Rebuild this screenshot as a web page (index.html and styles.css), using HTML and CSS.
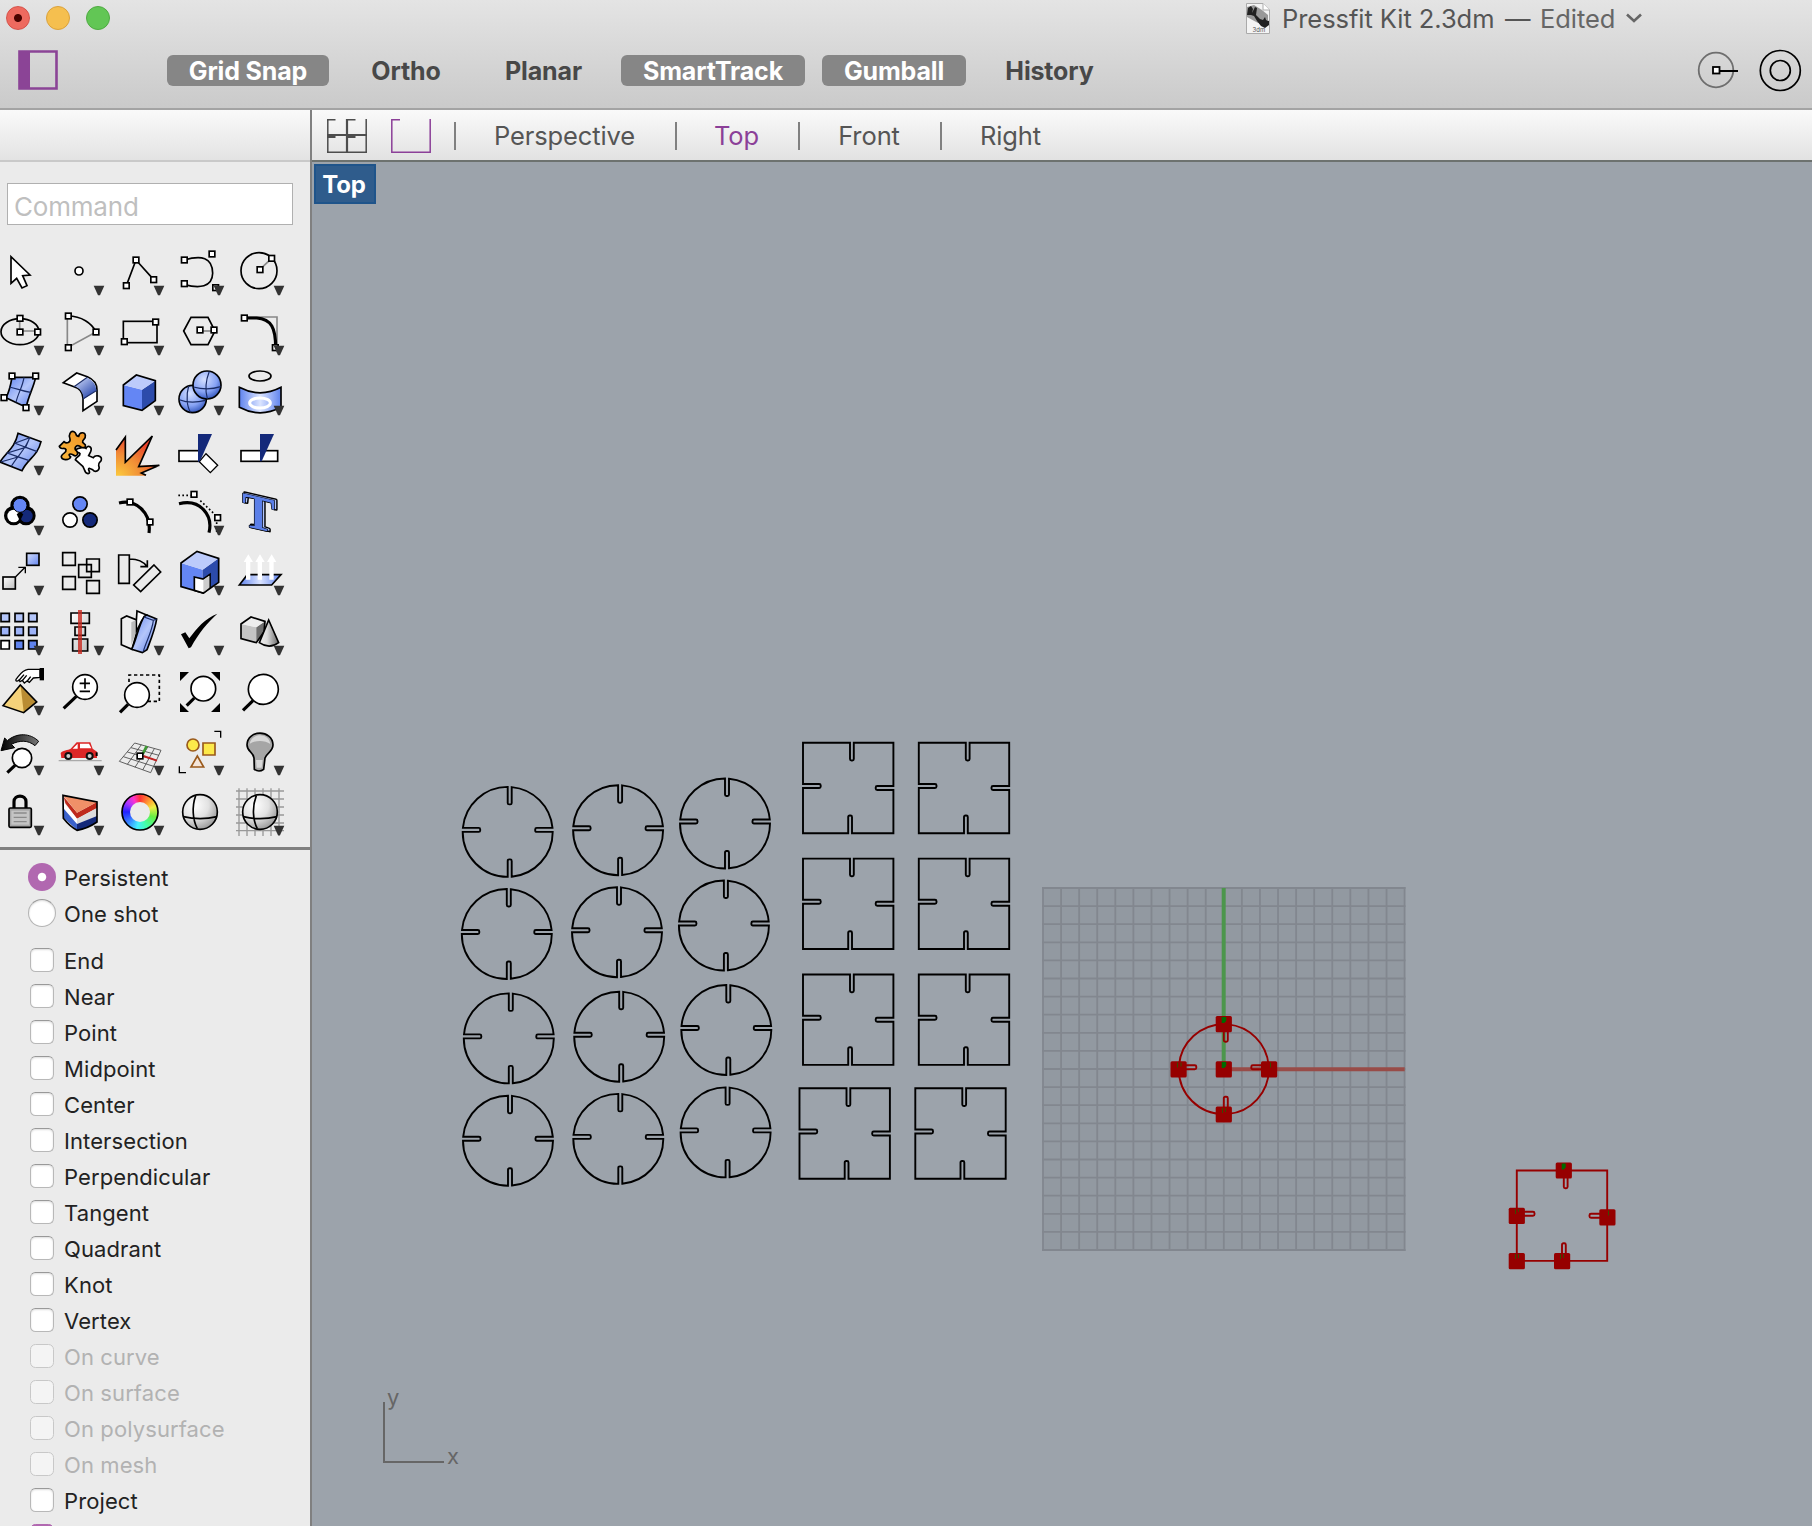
FILE: index.html
```html
<!DOCTYPE html>
<html lang="en">
<head>
<meta charset="utf-8">
<title>Pressfit Kit 2.3dm</title>
<link rel="stylesheet" href="styles.css">
</head>
<body>
<svg class="defs" width="0" height="0" aria-hidden="true">
  <defs>
    <linearGradient id="blue" x1="0" y1="0" x2="1" y2="1"><stop offset="0" stop-color="#5f83ee"/><stop offset=".5" stop-color="#b4c6fa"/><stop offset="1" stop-color="#5478e8"/></linearGradient>
    <linearGradient id="blue2" x1="0" y1="0" x2="1" y2="1"><stop offset="0" stop-color="#d5dffc"/><stop offset="1" stop-color="#6486f0"/></linearGradient>
    <linearGradient id="band" x1="0" x2="1"><stop offset="0" stop-color="#5f83ee"/><stop offset=".5" stop-color="#dbe4ff"/><stop offset="1" stop-color="#5f83ee"/></linearGradient>
    <linearGradient id="fold" x1="0" y1="0" x2=".8" y2="1"><stop offset="0" stop-color="#d5dffc"/><stop offset="1" stop-color="#1f3fa8"/></linearGradient>
    <radialGradient id="ball" cx=".4" cy=".3" r=".75"><stop offset="0" stop-color="#d5e0ff"/><stop offset=".6" stop-color="#86a2f4"/><stop offset="1" stop-color="#2b4fb8"/></radialGradient>
    <radialGradient id="fire" cx=".05" cy="1" r="1"><stop offset="0" stop-color="#fbc83e"/><stop offset=".55" stop-color="#f08a35"/><stop offset="1" stop-color="#e8402a"/></radialGradient>
    <linearGradient id="puz" x1="0" y1="1" x2="1" y2="0"><stop offset="0" stop-color="#fbb83c"/><stop offset="1" stop-color="#ef9426"/></linearGradient>
    <linearGradient id="grey" x1="0" y1="0" x2="1" y2="1"><stop offset="0" stop-color="#fff"/><stop offset="1" stop-color="#bdbdbd"/></linearGradient>
    <radialGradient id="globe" cx=".35" cy=".3" r=".8"><stop offset="0" stop-color="#fff"/><stop offset=".5" stop-color="#e2e2e2"/><stop offset="1" stop-color="#8e8e8e"/></radialGradient>
    <linearGradient id="cone" x1="0" x2="1"><stop offset="0" stop-color="#eee"/><stop offset=".4" stop-color="#ddd"/><stop offset="1" stop-color="#666"/></linearGradient>
    <linearGradient id="sweep" x1="0" x2="1"><stop offset="0" stop-color="#000"/><stop offset="1" stop-color="#777"/></linearGradient>
    <rect id="h" class="hd" x="-8.5" y="-8.5" width="17" height="17"/>
    <path id="d" fill="#333" d="M-16-14H16L3 15H-3Z"/>
    <path id="disc" d="M0-45V-29q0 1.500 1.500 1.500h1q1.500 0 1.500-1.500V-44.800A45 45 0 0 1 44.800-4H29q-1.500 0-1.500 1.500v1q0 1.500 1.500 1.500H45A45 45 0 0 1 4 44.800V29q0-1.500-1.500-1.500h-1q-1.500 0-1.500 1.500V45A45 45 0 0 1-45 0H-29q1.500 0 1.500-1.500v-1q0-1.500-1.500-1.500H-44.800A45 45 0 0 1 0-45Z"/>
    <path id="tile" d="M-45.200-45.200H1.800V-29q0 1.500 1.500 1.500h.8q1.500 0 1.500-1.500V-45.200H45.200V-2H29q-1.500 0-1.500 1.500v1q0 1.500 1.500 1.500H45.200V45.200H3.800V29q0-1.500-1.500-1.500h-.8q-1.500 0-1.500 1.500V45.200H-45.200V0H-29q1.500 0 1.500-1.500v-1q0-1.500-1.500-1.500H-45.200Z"/>
    <rect id="grip" x="-8" y="-8" width="16.200" height="16.200" rx="1.500"/>
  </defs>
</svg>

<div class="window">
  <header class="chrome">
    <div class="titlebar">
      <div class="lights"><i class="light red"></i><i class="light amber"></i><i class="light green"></i></div>
      <div class="title">
        <svg class="doc" viewBox="0 0 24 31"><path d="M.5.500H17L23.500 7V30.500H.5Z" fill="#f4f4f4" stroke="#aaa"/><path d="M1 4 8 2 16 7 22 12V17L12 20 1 14Z" fill="#999"/><path d="M1 12 2 5 5 3 7 6 6 10 9 4 11 5 10 12 14 16 17 17 19 14 20 17 23 18 23 22 19 25 15 23 11 18 8 13 5 12Z" fill="#222"/><path d="M17 .500V7H23.500" fill="#fff" stroke="#aaa"/><text x="6.500" y="29" font-size="6" fill="#555">3dm</text></svg>
        <span class="name">Pressfit Kit 2.3dm</span><span class="dash">—</span><span class="edited">Edited</span>
        <svg class="chev" viewBox="0 0 18 10"><path d="M2 1.500 9 8 16 1.500" fill="none" stroke="#666" stroke-width="2.600"/></svg>
      </div>
    </div>
    <div class="toolbar">
      <svg class="panel-icon" viewBox="0 0 40 40"><path d="M1.500 1.500H38.500V38.500H1.500Z" fill="none" stroke="#8b4496" stroke-width="2.600"/><path d="M1 1H12V39H1Z" fill="#8b4496"/></svg>
      <nav class="modes">
        <button class="mode on w-grid">Grid Snap</button>
        <button class="mode w-ortho">Ortho</button>
        <button class="mode w-planar">Planar</button>
        <button class="mode on w-smart">SmartTrack</button>
        <button class="mode on w-gum">Gumball</button>
        <button class="mode w-hist">History</button>
      </nav>
      <svg class="record" viewBox="0 0 112 44"><g fill="none"><circle cx="26" cy="22" r="17.300" stroke="#6e6e6e" stroke-width="1.800"/><path d="M30 23H48" stroke="#000" stroke-width="2"/><rect x="23" y="19" width="6.500" height="6.500" fill="#fff" stroke="#000" stroke-width="1.800"/><circle cx="90.300" cy="22.500" r="20" stroke="#000" stroke-width="1.700"/><circle cx="90.300" cy="22.500" r="10" stroke="#000" stroke-width="1.700"/></g></svg>
    </div>
  </header>

  <div class="body">
    <aside class="side">
      <div class="side-head"></div>
      <div class="command"><span>Command</span></div>
      <div class="tools">
        <svg viewBox="-30 18 180 180"><path class="k w" d="M33 65V145L50 130 66 159 81 152 68 122 90 120Z"/></svg>
        <svg viewBox="150 18 180 180"><circle class="k w" cx="237" cy="108" r="12"/><use href="#d" x="297" y="166"/></svg>
        <svg viewBox="330 18 180 180"><path class="k" d="M379 152 408 75 461 134"/><use href="#h" x="379" y="152"/><use href="#h" x="408" y="75"/><use href="#h" x="461" y="134"/><use href="#d" x="477" y="166"/></svg>
        <svg viewBox="510 18 180 180"><path class="k" d="M553 75C603 60 638 66 638 115 637 158 597 160 553 149"/><use href="#h" x="553" y="75"/><use href="#h" x="636" y="57"/><use href="#h" x="553" y="146"/><use href="#h" x="647" y="158"/><use href="#d" x="657" y="166"/></svg>
        <svg viewBox="690 18 180 180"><circle class="k" cx="777" cy="107" r="54"/><path class="g" d="M779 104 815 70"/><use href="#h" x="780" y="104"/><use href="#h" x="815" y="70"/><use href="#d" x="837" y="166"/></svg>

        <svg viewBox="-30 198 180 180"><ellipse class="k" cx="60" cy="290" rx="57" ry="39"/><path class="g" d="M59 250V288H113"/><use href="#h" x="60" y="250"/><use href="#h" x="60" y="291"/><use href="#h" x="113" y="291"/><use href="#d" x="117" y="346"/></svg>
        <svg viewBox="150 198 180 180"><path class="g" d="M202 243V338L288 291"/><path class="k" d="M204 243C245 243 275 265 288 290"/><use href="#h" x="205" y="243"/><use href="#h" x="205" y="338"/><use href="#h" x="288" y="291"/><use href="#d" x="297" y="346"/></svg>
        <svg viewBox="330 198 180 180"><rect class="k" x="370" y="259" width="101" height="64"/><use href="#h" x="467" y="261"/><use href="#h" x="373" y="320"/><use href="#d" x="477" y="346"/></svg>
        <svg viewBox="510 198 180 180"><path class="k" d="M551 288 573 247H624L645 288 624 329H573Z"/><path class="g" d="M600 288H640"/><use href="#h" x="600" y="285"/><use href="#h" x="642" y="285"/><use href="#d" x="657" y="346"/></svg>
        <svg viewBox="690 198 180 180"><path class="g" d="M733 246H831V338"/><path class="k bold" d="M733 249H770C815 252 827 280 827 338"/><use href="#h" x="733" y="249"/><use href="#h" x="826" y="338"/><use href="#d" x="837" y="346"/></svg>

        <svg viewBox="-30 378 180 180"><path class="k f-blue" d="M36 427H107C100 460 86 480 79 515 60 510 45 500 18 488 28 470 32 450 36 427Z"/><path class="n" d="M72 427C68 455 54 475 48 502M28 456C50 460 65 468 92 472"/><use href="#h" x="36" y="423"/><use href="#h" x="107" y="423"/><use href="#h" x="12" y="488"/><use href="#h" x="78" y="518"/><use href="#d" x="117" y="526"/></svg>
        <svg viewBox="150 378 180 180"><path class="k w" d="M190 443 230 414 262 425Q291 437 291 465V499L249 527V490Q248 462 222 455Z"/><path fill="url(#fold)" d="M225 454 262 428Q288 440 289 466L251 492Q250 466 225 454Z"/><path class="n" d="M222 455 262 427M249 492 291 466"/><use href="#d" x="297" y="526"/></svg>
        <svg viewBox="330 378 180 180"><path fill="#6486f4" d="M370 450 426 464V526L370 512Z"/><path fill="#2c4bab" d="M426 464 466 437V497L426 526Z"/><path fill="#bccbfb" d="M370 450 409 420 466 437 426 464Z"/><path class="k" d="M370 450 409 420 466 437V497L426 526 370 512Z"/><use href="#d" x="477" y="526"/></svg>
        <svg viewBox="510 378 180 180"><circle class="k f-ball" cx="578" cy="492" r="41"/><path class="n" d="M566 453C558 480 560 515 572 532M538 494C560 503 590 503 617 496"/><circle class="k f-ball" cx="621" cy="450" r="42"/><path class="n" d="M628 409C616 440 616 470 622 491M580 456C610 464 640 462 662 455"/><use href="#d" x="657" y="526"/></svg>
        <svg viewBox="690 378 180 180"><ellipse class="k" cx="780" cy="423" rx="33" ry="15"/><path class="k f-band" d="M718 457Q780 490 843 457V517Q780 550 718 517Z"/><ellipse cx="780" cy="504" rx="31" ry="15" fill="none" stroke="#fff" stroke-width="9"/><use href="#d" x="837" y="526"/></svg>

        <svg viewBox="-30 18 180 180"><path class="k f-blue" d="M54 55 123 80C112 125 84 130 66 167L0 141C20 110 44 100 54 55Z"/><path class="n" d="M89 68C76 105 50 125 34 154M43 84 112 110M22 114 88 137M46 84 89 68 77 97 112 110M77 97 22 114 54 126 88 137M54 126 2 141"/><use href="#d" x="117" y="166"/></svg>
        <svg viewBox="150 18 180 180"><path class="k w" d="M232 101C242 101 248 92 258 100 264 88 278 96 272 110L266 122 280 128C286 118 306 122 304 134 304 142 294 140 296 152 302 166 286 174 278 164L268 160C260 164 276 172 264 176 250 174 256 156 244 150L226 134C230 122 240 126 240 116 236 108 226 116 224 110Z"/><path class="k f-puz" d="M210 72C204 60 212 46 222 50 232 54 224 64 236 64 238 50 256 50 256 62 258 74 246 72 248 82L256 90C258 102 246 98 240 94 228 88 220 100 230 108 238 118 228 126 220 120 210 114 202 118 212 126 206 138 184 136 184 124 188 112 200 116 198 104 194 94 182 108 178 94L192 80C200 88 212 82 210 72Z"/></svg>
        <svg viewBox="330 18 180 180"><path fill="url(#fire)" d="M348 182V103L376 64V142L457 63 416 152 478 151 424 174 438 182Z"/><path class="k" d="M348 105 376 66V142L457 63 416 155 478 151 424 174 438 181"/></svg>
        <svg viewBox="510 18 180 180"><rect class="k w" x="537" y="107" width="61" height="32"/><path class="k w thin" d="M618 116 653 151 631 173 598 140Z"/><path fill="#14297a" d="M594 57H636L603 132 597 140H594Z"/></svg>
        <svg viewBox="690 18 180 180"><rect class="k w" x="723" y="107" width="110" height="32"/><path fill="#14297a" d="M780 57H822L785 139H780Z"/></svg>

        <svg viewBox="-30 198 180 180"><g stroke="#000" stroke-width="10"><circle cx="60" cy="271" r="24"/><circle cx="41" cy="302" r="24"/><circle cx="78" cy="302" r="24"/></g><circle cx="41" cy="303" r="19" fill="#fff"/><circle cx="79" cy="303" r="19" fill="#14297a"/><path d="M60 290 50 298 60 318 70 298Z"/><circle cx="60" cy="271" r="21" fill="#6486f4" stroke="#000" stroke-width="3"/><use href="#d" x="117" y="346"/></svg>
        <svg viewBox="150 198 180 180"><circle class="k f-mid" cx="240" cy="267" r="21.500"/><circle class="k w" cx="210" cy="315" r="21.500"/><circle class="k f-navy" cx="270" cy="315" r="21.500"/></svg>
        <svg viewBox="330 198 180 180"><path class="k bold" d="M357 264C405 252 455 290 447 354"/><use href="#h" x="390" y="261"/><use href="#h" x="450" y="321"/></svg>
        <svg viewBox="510 198 180 180"><path class="k bold" d="M537 266C600 250 640 300 627 353"/><path class="k dots" d="M535 241H572M601 257 642 296M650 322V356"/><use href="#h" x="582" y="238"/><use href="#h" x="653" y="308"/><use href="#d" x="657" y="346"/></svg>
        <svg viewBox="690 198 180 180"><g class="solid-t" transform="translate(776 342) skewY(13)"><text class="back" x="5" y="-2">T</text><text class="front" x="-1" y="1">T</text></g></svg>

        <svg viewBox="-30 378 180 180"><rect class="k f-blue2" x="80" y="415" width="37" height="36"/><rect class="k f-grey" x="9" y="486" width="37" height="36"/><path class="k thin" d="M47 485 76 456M55 457H76V475"/><use href="#d" x="117" y="526"/></svg>
        <svg viewBox="150 378 180 180"><path class="k" d="M188 413h38v38h-38zM260 432h38v38h-38zM236 449h38v38h-38zM188 485h38v38h-38zM260 497h38v38h-38z"/></svg>
        <svg viewBox="330 378 180 180"><path class="k" d="M356 420H388V505H356ZM462 450 482 471 422 530 401 510ZM390 432Q425 432 440 454M421 455H442V436"/></svg>
        <svg viewBox="510 378 180 180"><path fill="#6486f4" d="M543 444 608 464V534L543 515Z"/><path fill="#2c4bab" d="M608 464 656 430V502L608 534Z"/><path fill="#bccbfb" d="M543 444 591 409 656 430 608 464Z"/><path class="k" d="M543 444 591 409 656 430V502L610 534 543 515Z"/><path class="k w" d="M583 486 610 492 630 478V518L610 534 583 526Z"/><path fill="#ccc" d="M610 494 628 482V518L610 532Z"/><use href="#d" x="657" y="526"/></svg>
        <svg viewBox="690 378 180 180"><path class="k f-band" d="M718 510 742 479H843L815 510Z"/><path fill="#fff" d="M745 418 759 441H751V494H738V441H731ZM780 418 794 441H786V494H773V441H766ZM815 418 829 441H821V494H808V441H801Z"/><use href="#d" x="837" y="526"/></svg>

        <svg viewBox="-30 558 180 180"><g class="k"><path fill="#b4c6fa" d="M3 595h25v25h-25zM45 595h25v25h-25zM86 595h25v25h-25z"/><path fill="#9db3f8" d="M3 636h25v25h-25zM45 636h25v25h-25zM86 636h25v25h-25z"/><path fill="#fff" d="M3 677h25v25h-25z"/><path fill="#5f83ee" d="M45 677h25v25h-25zM86 677h25v25h-25z"/></g><use href="#d" x="117" y="706"/></svg>
        <svg viewBox="150 558 180 180"><g class="k"><path fill="url(#grey)" d="M213 594h55v31h-55zM225 636h31v25h-31zM218 672h45v36h-45z"/></g><path d="M240 585V717" stroke="#c8281e" stroke-opacity=".8" stroke-width="12"/><use href="#d" x="297" y="706"/></svg>
        <svg viewBox="330 558 180 180"><path class="k w" d="M409 617 411 588 440 600 425 617 409 650Z"/><path class="k f-pale" d="M364 611 380 603 408 614V660L396 703 364 689Z"/><path fill="#bbb" d="M394 622 407 616V655L394 690Z"/><path class="k f-blue" d="M395 703C410 670 415 635 432 605L440 600 470 612C465 645 450 680 441 704L427 713Z"/><path class="n" d="M432 606 460 616 470 612M460 617C456 650 438 680 430 709"/><use href="#d" x="477" y="706"/></svg>
        <svg viewBox="510 558 180 180"><path d="M543 658 556 652 568 670C590 640 615 610 652 596 625 620 595 655 573 697L566 700Z"/><use href="#d" x="657" y="706"/></svg>
        <svg viewBox="690 558 180 180"><path fill="#c4c4c4" d="M723 627 769 637V683L723 670Z"/><path fill="#6e6e6e" d="M769 637 795 619 788 665 769 683Z"/><path fill="#eee" d="M723 627 753 606 795 619 769 637Z"/><path class="k" d="M723 627 753 606 795 619 792 650 769 683 723 671Z"/><path class="k f-cone" d="M806 615 836 683Q808 704 778 683Z"/><use href="#d" x="837" y="706"/></svg>

        <svg viewBox="-30 183 180 180"><path fill="#f5d27a" d="M9 317 61 255 110 306 71 338Z"/><path fill="#b98c32" d="M62 258 107 306 71 335Z"/><path class="k" d="M9 317 61 255 110 306 71 338Z"/><path class="k w thin" d="M120 208H84C66 210 58 226 48 238 46 245 53 244 57 240L60 245 67 241 73 249 81 243 88 247 100 234 120 232Z"/><path class="k thin" d="M58 240 72 224M67 242 80 226M82 243 92 230"/><path d="M119 204H132V241H119Z"/><use href="#d" x="117" y="331"/></svg>
        <svg viewBox="150 183 180 180"><path class="k bold" d="M191 325 229 289"/><circle class="k w" cx="255" cy="261" r="37"/><path class="k" d="M239 250H270M255 235V266M239 274H270"/></svg>
        <svg viewBox="330 183 180 180"><path class="k dash-box" d="M387 246V225H478V304H440"/><path class="k bold" d="M360 337 384 313"/><circle class="k w" cx="411" cy="285" r="37"/></svg>
        <svg viewBox="510 183 180 180"><path d="M540 216H567L540 243ZM660 216H633L660 243ZM540 336H567L540 309ZM660 336H633L660 309Z"/><path class="k bold" d="M560 317 583 294"/><circle class="k w" cx="610" cy="266" r="37"/></svg>
        <svg viewBox="690 183 180 180"><path class="k bold" d="M729 331 759 302"/><circle class="k w" cx="790" cy="268" r="45"/></svg>

        <svg viewBox="-30 363 180 180"><path fill="url(#sweep)" stroke="#000" stroke-width="3" d="M3 452 14 414 22 422C50 398 90 398 116 424L105 437C84 420 60 420 34 433L44 443Z"/><path class="k bold" d="M22 518 45 496"/><circle class="k w" cx="66" cy="474" r="29"/><use href="#d" x="117" y="511"/></svg>
        <svg viewBox="150 363 180 180"><path d="M176 482H305" stroke="#aaa" stroke-width="4"/><path fill="#dc2626" d="M182 459C186 452 205 450 212 446L230 427H271L278 446 291 455V474H184Z"/><path fill="#fff" d="M218 446 233 431V446ZM240 431H267L274 445H240Z"/><path d="M287 457H293V468H287Z"/><g stroke="#111" stroke-width="6" fill="#ccc"><circle cx="205" cy="468" r="9"/><circle cx="269" cy="468" r="9"/></g><use href="#d" x="297" y="511"/></svg>
        <svg viewBox="330 363 180 180"><path d="M404 429 483 451 452 518 358 484ZM393 443 477 466M382 456 469 481M370 470 461 499M424 434 382 493M444 440 405 502M463 446 428 510" fill="none" stroke="#444" stroke-width="2.500"/><path d="M428 462 440 438" stroke="#3f9a35" stroke-width="8"/><path d="M430 468 471 482" stroke="#c02020" stroke-width="6"/><use href="#h" x="420" y="468"/><use href="#d" x="477" y="511"/></svg>
        <svg viewBox="510 363 180 180"><g stroke="#9a5a1c" stroke-width="5" fill="#fce94a"><circle cx="579" cy="435" r="18"/><path d="M609 429H645V465H609Z"/><path fill="#f5e6da" d="M592 468 611 501H573Z"/></g><path class="k thin" d="M643 394H662V413M538 499V518H558"/><use href="#d" x="657" y="511"/></svg>
        <svg viewBox="690 363 180 180"><path class="k f-bulb" d="M762 474C760 455 741 455 741 434 743 388 817 388 819 434 819 455 800 458 795 474L791 508Q777 518 763 508Z"/><path fill="#d8d8d8" d="M749 432C753 397 807 397 811 432 795 420 765 420 749 432ZM768 480H788L785 503H770Z"/><use href="#d" x="837" y="511"/></svg>

        <svg viewBox="-30 543 180 180"><path class="k bold" d="M42 624V605C42 583 78 583 78 605V624"/><rect class="k f-bulb" x="27" y="624" width="67" height="58" rx="4"/><path d="M34 632H87V674H34Z" fill="#c4c4c4"/><path d="M41 639H80M41 652H80M41 665H80" stroke="#8a8a8a" stroke-width="4"/><use href="#d" x="117" y="691"/></svg>
        <svg viewBox="150 543 180 180"><path fill="#bf2a1c" d="M231 638 291 606V624L231 656 196 610 191 590Z"/><path fill="#f09068" d="M189 586 291 606 231 638Z"/><path fill="#ddd" d="M231 656 291 624V650L231 672Z"/><path fill="#fff" d="M190 606 231 656V672L190 625Z"/><path fill="#3b62cc" d="M190 625 231 672V690L192 655Z"/><path fill="#14297a" d="M231 672 291 648V666Q260 688 231 691Z"/><path class="k" d="M189 586 291 606V666Q262 686 231 691 210 680 190 655Z"/><use href="#d" x="297" y="691"/></svg>
        <svg viewBox="330 543 180 180"><foreignObject x="365" y="581" width="110" height="110"><div class="wheel"></div></foreignObject><circle cx="420" cy="636" r="30" fill="#ebebeb"/><circle class="k" cx="420" cy="636" r="54"/><use href="#d" x="477" y="691"/></svg>
        <svg viewBox="510 543 180 180"><circle class="k f-globe" cx="600" cy="636" r="52"/><path class="k" d="M587 587C575 620 578 660 592 686M550 650Q600 662 651 650"/></svg>
        <svg viewBox="690 543 180 180"><path d="M717 565V708M741 565V708M765 565V708M789 565V708M813 565V708M837 565V708M708 573H852M708 597H852M708 621H852M708 645H852M708 669H852M708 692H852" stroke="#999" stroke-width="4"/><circle class="k f-globe" cx="780" cy="636" r="52"/><path class="k" d="M769 587C756 620 758 660 772 686M730 650Q780 662 831 650"/><use href="#d" x="837" y="691"/></svg>
      </div>
      <div class="snaps">
        <div class="row"><i class="radio sel"></i>Persistent</div>
        <div class="row last-radio"><i class="radio"></i>One shot</div>
        <div class="row"><i class="box"></i>End</div>
        <div class="row"><i class="box"></i>Near</div>
        <div class="row"><i class="box"></i>Point</div>
        <div class="row"><i class="box"></i>Midpoint</div>
        <div class="row"><i class="box"></i>Center</div>
        <div class="row"><i class="box"></i>Intersection</div>
        <div class="row"><i class="box"></i>Perpendicular</div>
        <div class="row"><i class="box"></i>Tangent</div>
        <div class="row"><i class="box"></i>Quadrant</div>
        <div class="row"><i class="box"></i>Knot</div>
        <div class="row"><i class="box"></i>Vertex</div>
        <div class="row off"><i class="box"></i>On curve</div>
        <div class="row off"><i class="box"></i>On surface</div>
        <div class="row off"><i class="box"></i>On polysurface</div>
        <div class="row off"><i class="box"></i>On mesh</div>
        <div class="row"><i class="box"></i>Project</div>
        <div class="row"><i class="box checked"></i></div>
      </div>
    </aside>

    <main class="main">
      <nav class="tabs">
        <svg class="four" viewBox="0 0 40 34"><path d="M.8 34V0M39.200 34V0M0 33.200H40M0 .800H8.500M20 .800H28.500" fill="none" stroke="#4d4d4d" stroke-width="1.500"/><path d="M0 16H40M20 0V34M0 18H8.500M20 18H28.500" stroke="#4d4d4d" stroke-width="2.200"/></svg>
        <svg class="one" viewBox="0 0 40 34"><path d="M9 .800H.8V33.200H39.200V0" fill="none" stroke="#8b3f98" stroke-width="1.500"/></svg>
        <i class="sep"></i><span class="tab t-persp">Perspective</span>
        <i class="sep"></i><span class="tab t-top">Top</span>
        <i class="sep"></i><span class="tab t-front">Front</span>
        <i class="sep"></i><span class="tab t-right">Right</span>
      </nav>
      <section class="viewport">
        <svg class="scene" viewBox="312 162 1500 1364">
          <rect x="1043" y="888" width="361.600" height="362" fill="#9299a1"/>
          <g fill="none" stroke="#82878f" stroke-width="1.800">
            <path d="M1043 887v364m18.080-364v364m18.080-364v364m18.080-364v364m18.080-364v364m18.080-364v364m18.080-364v364m18.080-364v364m18.080-364v364m18.080-364v364m18.080-364v364m18.080-364v364m18.080-364v364m18.080-364v364m18.080-364v364m18.080-364v364m18.080-364v364m18.080-364v364m18.080-364v364m18.080-364v364m18.080-364v364"/>
            <path d="M1042 888h363.500m-363.500 18.100h363.500m-363.500 18.100h363.500m-363.500 18.100h363.500m-363.500 18.100h363.500m-363.500 18.100h363.500m-363.500 18.100h363.500m-363.500 18.100h363.500m-363.500 18.100h363.500m-363.500 18.100h363.500m-363.500 18.100h363.500m-363.500 18.100h363.500m-363.500 18.100h363.500m-363.500 18.100h363.500m-363.500 18.100h363.500m-363.500 18.100h363.500m-363.500 18.100h363.500m-363.500 18.100h363.500m-363.500 18.100h363.500m-363.500 18.100h363.500m-363.500 18.100h363.500"/>
          </g>
          <path d="M1223.700 888V1069" stroke="#4c964c" stroke-width="4"/>
          <path d="M1224 1069.300H1404.700" stroke="#984c48" stroke-width="4"/>
          <g fill="none" stroke="#000" stroke-width="1.900">
            <use href="#disc" x="507.700" y="831.900"/><use href="#disc" x="618.100" y="830.200"/><use href="#disc" x="725" y="823.500"/>
            <use href="#disc" x="506.800" y="934"/><use href="#disc" x="617" y="932.200"/><use href="#disc" x="723.900" y="925.500"/>
            <use href="#disc" x="508.800" y="1038.400"/><use href="#disc" x="619.200" y="1036.700"/><use href="#disc" x="726.300" y="1030"/>
            <use href="#disc" x="508" y="1140.700"/><use href="#disc" x="618.300" y="1138.900"/><use href="#disc" x="725.600" y="1132.400"/>
            <use href="#tile" x="848.200" y="788"/><use href="#tile" x="964" y="788"/>
            <use href="#tile" x="848.200" y="903.800"/><use href="#tile" x="964" y="903.800"/>
            <use href="#tile" x="848.200" y="1019.700"/><use href="#tile" x="964" y="1019.700"/>
            <use href="#tile" x="844.700" y="1133.500"/><use href="#tile" x="960.500" y="1133.500"/>
          </g>
          <g fill="none" stroke="#960000" stroke-width="1.900"><use href="#disc" x="1223.800" y="1069.200"/><use href="#tile" x="1562" y="1215.700"/></g>
          <g fill="#960000">
            <use href="#grip" x="1223.700" y="1069.200"/><use href="#grip" x="1223.700" y="1024"/><use href="#grip" x="1223.700" y="1114.400"/><use href="#grip" x="1178.500" y="1069.200"/><use href="#grip" x="1269" y="1069.200"/>
            <use href="#grip" x="1563.700" y="1170.400"/><use href="#grip" x="1516.700" y="1215.700"/><use href="#grip" x="1607.300" y="1217.300"/><use href="#grip" x="1516.700" y="1261"/><use href="#grip" x="1562" y="1261"/>
          </g>
          <path fill="#006a00" d="M1221.700 1017h4.500v4l-2 2h-2.500zM1221.700 1062h4.500v4l-2 2h-2.500zM1561.700 1163.500h4v4l-2 2h-2z"/>
          <path stroke="#3a4a00" stroke-width="1" d="M1177.500 1062.500v5M1181 1062.500v4M1222.500 1108v5M1225.500 1108v4M1270.500 1062.500v5M1515.500 1209v5M1518.500 1209v3M1608.500 1210.500v5M1515.500 1254v5M1518.500 1254v4M1560.500 1254v5M1563.500 1254v4"/>
          <path d="M384 1402V1462H444" fill="none" stroke="#666" stroke-width="2"/>
          <g fill="#666" font-size="22"><text x="387" y="1405">y</text><text x="447" y="1463.500">x</text></g>
        </svg>
        <span class="label">Top</span>
      </section>
    </main>
  </div>
</div>
</body>
</html>
```
FILE: styles.css
```css
* { box-sizing: border-box; }
body { margin: 0; font-family: Inter, "Liberation Sans", sans-serif; background: #ebebeb; overflow: hidden; }
i { font-style: normal; display: block; flex: none; }
svg { display: block; flex: none; }
.defs { position: absolute; }
.window { width: 1812px; height: 1526px; display: flex; flex-direction: column; overflow: hidden; }

.chrome { height: 110px; flex: none; background: linear-gradient(#e4e4e4, #cacaca); border-bottom: 2px solid #a3a3a3; }
.titlebar { height: 36px; display: flex; align-items: center; padding-left: 6px; }
.lights { display: flex; gap: 16px; width: 1240px; flex: none; }
.light { width: 24px; height: 24px; border-radius: 50%; border: 1px solid; }
.red { background: radial-gradient(circle, #4a0300 3.500px, #ee6a5f 4.500px); border-color: #d6524a; }
.amber { background: #f5bf4f; border-color: #dba23c; }
.green { background: #62c655; border-color: #4fab42; }
.title { display: flex; align-items: center; color: #555; font-size: 25.500px; line-height: 36px; white-space: nowrap; }
.title span { padding-top: 1px; }
.doc { width: 24px; height: 31px; margin-right: 12px; }
.name { width: 223px; letter-spacing: -.06px; }
.dash { width: 35px; }
.edited { width: 85px; color: #666; letter-spacing: -.05px; }
.chev { width: 18px; height: 10px; }
.toolbar { height: 72px; display: flex; padding-left: 18px; }
.panel-icon { width: 40px; height: 40px; margin-top: 14px; }
.modes { display: flex; gap: 17px; margin: 19px 0 0 109px; height: 31px; width: 1523px; flex: none; }
.mode { height: 31px; padding: 1px 0 0; border: 0; border-radius: 6px; background: none; color: #484848; font: 700 25px/30px Inter, sans-serif; letter-spacing: -.15px; white-space: nowrap; flex: none; }
.mode.on { background: #868686; color: #fff; }
.w-grid { width: 162px; } .w-ortho { width: 120px; } .w-planar { width: 121px; }
.w-smart { width: 184px; } .w-gum { width: 144px; } .w-hist { width: 133px; }
.record { width: 112px; height: 44px; margin-top: 12px; }

.body { flex: 1; display: flex; min-height: 0; }
.side { width: 312px; flex: none; border-right: 2px solid #808080; background: #ebebeb; overflow: hidden; }
.side-head { height: 52px; background: linear-gradient(#fafafa, #e3e3e3); border-bottom: 2px solid #c9c9c9; }
.command { width: 286px; height: 42px; margin: 21px 0 0 7px; background: #fff; border: 1px solid #b0b0b0; padding-left: 6px; color: #bfbfbf; font-size: 26px; line-height: 46px; letter-spacing: -.2px; }
.tools { display: grid; grid-template-columns: repeat(5, 60px); grid-auto-rows: 60px; margin: 16px 0 0 -10px; }
.tools svg { width: 60px; height: 60px; overflow: visible; }
.k { fill: none; stroke: #000; stroke-width: 5; }
.k.w { fill: #fff; }
.k.bold { stroke-width: 9.5; }
.k.thin { stroke-width: 4; }
.k.dots { stroke-dasharray: 5 7; }
.k.dash-box { stroke-dasharray: 10 8; }
.k.f-blue { fill: url(#blue); }
.k.f-blue2 { fill: url(#blue2); }
.k.f-band { fill: url(#band); }
.k.f-ball { fill: url(#ball); }
.k.f-puz { fill: url(#puz); }
.k.f-grey { fill: url(#grey); }
.k.f-cone { fill: url(#cone); }
.k.f-globe { fill: url(#globe); }
.k.f-mid { fill: #6486f4; }
.k.f-navy { fill: #14297a; }
.k.f-pale { fill: #eee; }
.k.f-bulb { fill: #a6a6a6; }
.g { fill: none; stroke: #888; stroke-width: 5; }
.n { fill: none; stroke: #1a2c66; stroke-width: 3.500; }
.hd { fill: #fff; stroke: #000; stroke-width: 5; }
.solid-t { font: 700 148px "Liberation Serif", serif; text-anchor: middle; stroke: #000; stroke-width: 9; stroke-linejoin: round; paint-order: stroke; }
.solid-t .back { fill: #b4c6fa; }
.solid-t .front { fill: #5b7fe8; stroke-width: 4; }
.wheel { width: 110px; height: 110px; border-radius: 50%; background: conic-gradient(#f33, #fa3 45deg, #ee4 70deg, #6e4 110deg, #4fa 155deg, #4ef 190deg, #36f 240deg, #22f 270deg, #a3f 305deg, #f3c 335deg, #f33); }

.snaps { margin-top: 6px; border-top: 3px solid #808080; padding: 9px 0 0 28px; }
.row { height: 36px; display: flex; align-items: center; color: #222; font-size: 22px; line-height: 36px; letter-spacing: .1px; white-space: nowrap; padding-top: 1px; }
.last-radio { margin-bottom: 11px; }
.radio { width: 28px; height: 28px; border-radius: 50%; border: 1px solid #b4b4b4; border-top-color: #999; background: #fff; margin: -1px 8px 0 0; box-shadow: inset 0 1px 2px #ddd; }
.radio.sel { border: 0; background: radial-gradient(circle, #fff 3.700px, #b168b0 4.700px); box-shadow: none; }
.box { width: 24px; height: 24px; border-radius: 5.500px; border: 1px solid #b8b8b8; border-top-color: #999; background: #fff; margin: -1px 10px 0 2px; box-shadow: inset 0 1px 2px #ddd; }
.off { color: #b2b2b2; }
.off .box { background: #f4f4f4; border-color: #c8c8c8; box-shadow: none; }
.box.checked { background: #b168b0; border-color: #b168b0; box-shadow: none; }

.main { flex: 1; display: flex; flex-direction: column; min-width: 0; }
.tabs { height: 52px; flex: none; display: flex; align-items: center; background: linear-gradient(#fafafa, #e2e2e2); border-bottom: 2px solid #6d726f; padding-left: 15px; color: #555; font-size: 25.500px; }
.four, .one { width: 40px; height: 34px; margin-top: 2px; }
.one { margin: 2px 23px 0 24px; }
.sep { width: 2px; height: 28px; margin-top: 2px; background: #808080; }
.tab { text-align: center; white-space: nowrap; line-height: 32px; margin-top: 1px; padding-right: 2px; letter-spacing: -.1px; }
.t-persp { width: 219px; } .t-top { width: 121px; color: #8b3f98; } .t-front { width: 140px; } .t-right { width: 139px; }
.viewport { flex: 1; position: relative; background: #9ca3ab; }
.scene { width: 1500px; height: 1364px; }
.label { position: absolute; left: 2px; top: 2px; width: 62px; height: 40px; background: #2f5c8c; border: 2px solid #1f548a; color: #fff; font-weight: 700; font-size: 24px; line-height: 38px; text-align: center; letter-spacing: -.2px; padding-right: 2px; }
```
